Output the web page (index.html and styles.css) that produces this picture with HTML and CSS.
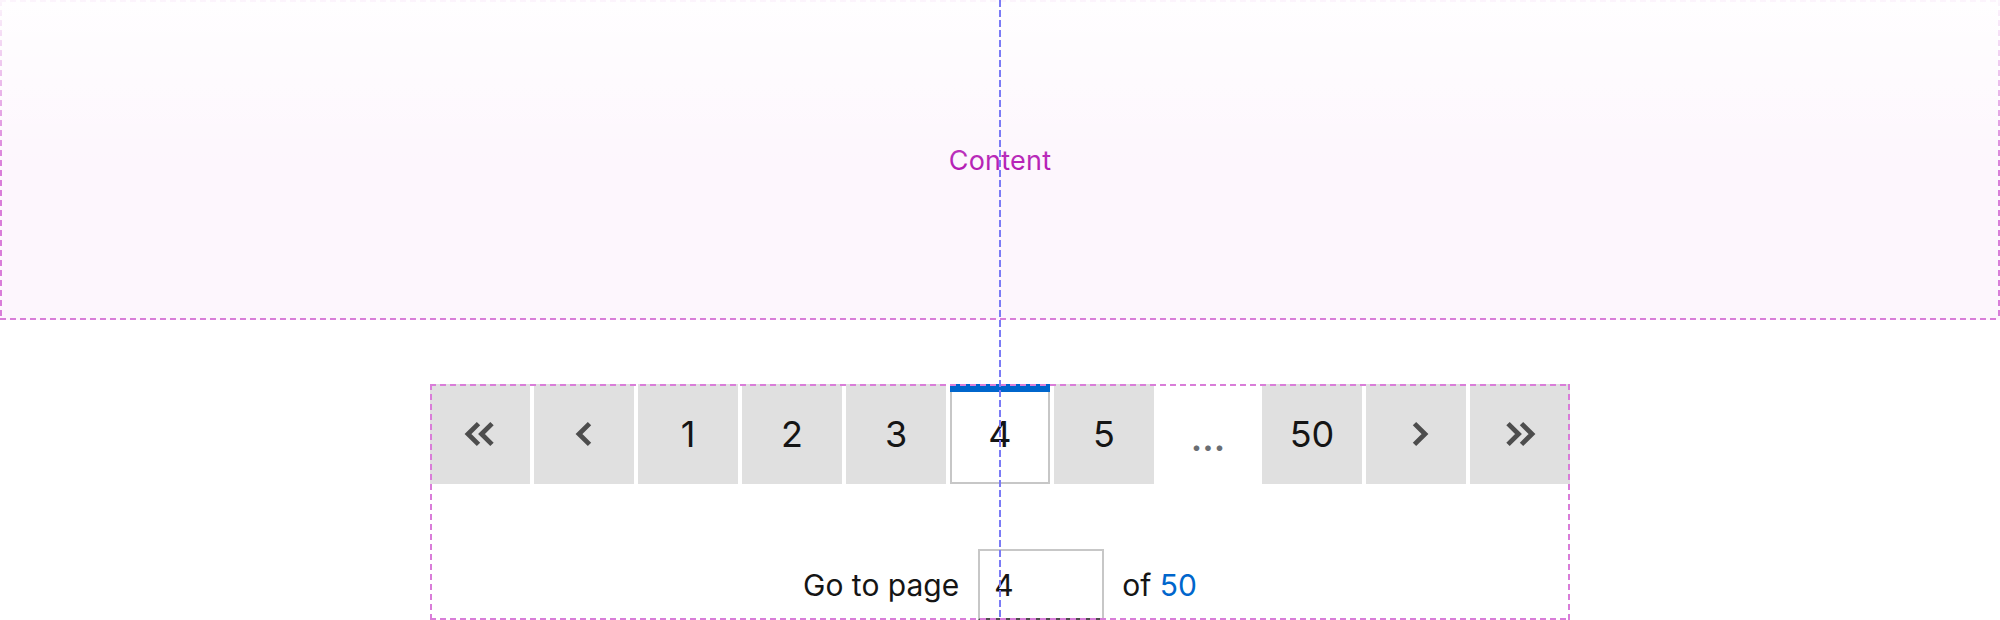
FILE: index.html
```html
<!DOCTYPE html>
<html lang="en">
<head>
<meta charset="utf-8">
<title>Pagination</title>
<link rel="stylesheet" href="styles.css">
</head>
<body>
<div class="stage">
  <section class="content-box outlined">
    <span class="content-label">Content</span>
    <div class="fade"></div>
  </section>

  <div class="pager outlined">
    <nav class="pages" aria-label="Pagination">
      <button class="pg icon" aria-label="First page">
        <svg class="dbl" viewBox="0 0 32 26" aria-hidden="true"><polyline points="14.5,2.6 4,13 14.5,23.4"/><polyline points="28,2.6 17.5,13 28,23.4"/></svg>
      </button>
      <button class="pg icon" aria-label="Previous page">
        <svg class="sgl prev" viewBox="0 0 17 26" aria-hidden="true"><polyline points="14.5,2.6 4,13 14.5,23.4"/></svg>
      </button>
      <button class="pg">1</button>
      <button class="pg">2</button>
      <button class="pg">3</button>
      <button class="pg active" aria-current="page">4</button>
      <button class="pg">5</button>
      <span class="pg ellipsis">...</span>
      <button class="pg">50</button>
      <button class="pg icon" aria-label="Next page">
        <svg class="sgl next" viewBox="0 0 17 26" aria-hidden="true"><polyline points="2.5,2.6 13,13 2.5,23.4"/></svg>
      </button>
      <button class="pg icon" aria-label="Last page">
        <svg class="dbl" viewBox="0 0 32 26" aria-hidden="true"><polyline points="4,2.6 14.5,13 4,23.4"/><polyline points="17.5,2.6 28,13 17.5,23.4"/></svg>
      </button>
    </nav>

    <div class="jump">
      <label class="jump-label" for="page-input">Go to page</label>
      <input id="page-input" class="jump-input" type="text" value="4">
      <span class="jump-total">of <a class="total-link" href="#">50</a></span>
    </div>
  </div>

  <div class="guide"></div>
</div>
</body>
</html>
```

FILE: styles.css
```css
html, body {
  margin: 0;
  padding: 0;
  background: #ffffff;
}

body {
  width: 2000px;
  height: 620px;
  overflow: hidden;
  font-family: Inter, "Liberation Sans", sans-serif;
  color: #151515;
}

.stage {
  position: relative;
  width: 2000px;
  height: 620px;
}

/* dashed measurement outline drawn over content */
.outlined {
  position: relative;
}

.outlined::after {
  content: "";
  position: absolute;
  inset: 0;
  pointer-events: none;
  z-index: 2;
  background:
    repeating-linear-gradient(90deg, #d97dd9 0 6px, transparent 6px 10px) left top / 100% 2px no-repeat,
    repeating-linear-gradient(90deg, #d97dd9 0 6px, transparent 6px 10px) left bottom / 100% 2px no-repeat,
    repeating-linear-gradient(180deg, #d97dd9 0 6px, transparent 6px 10px) left top / 2px 100% no-repeat,
    repeating-linear-gradient(180deg, #d97dd9 0 6px, transparent 6px 10px) right top / 2px 100% no-repeat;
}

.content-box {
  height: 320px;
  background: #fdf6fd;
  display: flex;
  align-items: center;
  justify-content: center;
}

.content-label {
  font-size: 27px;
  color: #b41ab4;
  letter-spacing: 0.2px;
}

.fade {
  position: absolute;
  inset: 0;
  z-index: 3;
  pointer-events: none;
  background: linear-gradient(180deg, rgba(255,255,255,0.92) 0px, rgba(255,255,255,0) 170px);
}

.pager {
  width: 1140px;
  margin: 64px auto 0;
}

.pages {
  display: flex;
  gap: 4px;
}

.pg {
  position: relative;
  box-sizing: border-box;
  width: 100px;
  height: 100px;
  padding: 0;
  border: 0;
  background: #e0e0e0;
  display: flex;
  align-items: center;
  justify-content: center;
  font-family: Inter, "Liberation Sans", sans-serif;
  font-size: 36px;
  color: #151515;
}

.pg.icon {
  color: #4d4d4d;
}

.pg svg {
  height: 26px;
  fill: none;
  stroke: currentColor;
  stroke-width: 4.8;
  stroke-linecap: butt;
  stroke-linejoin: miter;
  overflow: visible;
}

.pg svg.dbl {
  width: 32px;
}

.pg svg.sgl {
  width: 17px;
}

.pg svg.prev {
  margin-left: -2px;
}

.pg svg.next {
  margin-left: 8px;
}

.pg.active {
  background: #ffffff;
  border: 2px solid #c7c7c7;
}

.pg.active::before {
  content: "";
  position: absolute;
  left: -2px;
  right: -2px;
  top: -2px;
  height: 8px;
  background: #0066cc;
}

.pg.ellipsis {
  background: #ffffff;
  color: #6a6e73;
  padding-top: 8px;
  font-weight: 600;
}

.jump {
  margin-top: 65px;
  height: 71px;
  display: flex;
  align-items: center;
  justify-content: center;
  font-size: 30px;
  color: #151515;
}

.jump-label {
  margin-right: 19px;
}

.jump-input {
  box-sizing: border-box;
  width: 126px;
  height: 71px;
  margin: 0 18px 0 0;
  padding: 0 14px;
  border: 2px solid #c7c7c7;
  border-bottom-color: #4f4f4f;
  font-family: Inter, "Liberation Sans", sans-serif;
  font-size: 30px;
  color: #151515;
  background: #ffffff;
  outline: none;
}

.total-link {
  color: #0066cc;
  text-decoration: none;
}

.guide {
  position: absolute;
  left: 999px;
  top: 0;
  width: 2px;
  height: 620px;
  z-index: 5;
  background: repeating-linear-gradient(180deg, #7b7bf6 0 7px, transparent 7px 10px);
}
```
